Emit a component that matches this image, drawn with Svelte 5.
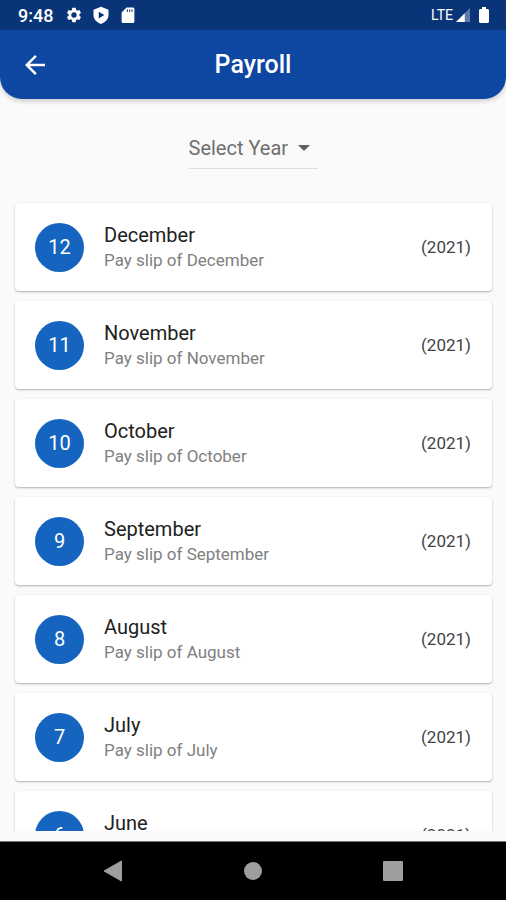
<script lang="ts">
  let year = '';

  const payslips: { month: string; number: number; year: number }[] = [
    { month: 'December', number: 12, year: 2021 },
    { month: 'November', number: 11, year: 2021 },
    { month: 'October', number: 10, year: 2021 },
    { month: 'September', number: 9, year: 2021 },
    { month: 'August', number: 8, year: 2021 },
    { month: 'July', number: 7, year: 2021 },
    { month: 'June', number: 6, year: 2021 }
  ];
</script>

<div class="screen">
  <header class="top">
    <div class="status-bar">
      <span class="clock">9:48</span>
      <div class="status-icons">
        <svg width="18" height="18" viewBox="0 0 24 24" fill="currentColor">
          <path d="M19.14 12.94c.04-.3.06-.61.06-.94 0-.32-.02-.64-.07-.94l2.03-1.58c.18-.14.23-.41.12-.61l-1.92-3.32c-.12-.22-.37-.29-.59-.22l-2.39.96c-.5-.38-1.03-.7-1.62-.94l-.36-2.54c-.04-.24-.24-.41-.48-.41h-3.84c-.24 0-.43.17-.47.41l-.36 2.54c-.59.24-1.13.57-1.62.94l-2.39-.96c-.22-.08-.47 0-.59.22L2.74 8.87c-.12.21-.08.47.12.61l2.03 1.58c-.05.3-.09.63-.09.94s.02.64.07.94l-2.03 1.58c-.18.14-.23.41-.12.61l1.92 3.32c.12.22.37.29.59.22l2.39-.96c.5.38 1.03.7 1.62.94l.36 2.54c.05.24.24.41.48.41h3.84c.24 0 .44-.17.47-.41l.36-2.54c.59-.24 1.13-.56 1.62-.94l2.39.96c.22.08.47 0 .59-.22l1.92-3.32c.12-.22.07-.47-.12-.61l-2.01-1.58zM12 15.6A3.6 3.6 0 1 1 12 8.4a3.6 3.6 0 0 1 0 7.2z" />
        </svg>
        <svg width="18" height="18" viewBox="0 0 24 24" fill="currentColor">
          <path fill-rule="evenodd" d="M12 1 2 5v7c0 5.6 4.2 10 10 12 5.8-2 10-6.4 10-12V5L12 1zM9 7.5v9l7.5-4.5L9 7.5z" />
        </svg>
        <svg width="18" height="18" viewBox="0 0 24 24" fill="currentColor">
          <path fill-rule="evenodd" d="M18.5 2H10L3.500 8.500V20.500c0 1.100.9 2 2 2h13c1.100 0 2-.9 2-2V4c0-1.100-.9-2-2-2zM10.500 4.500h1.500v3h-1.500v-3zm3 0h1.500v3h-1.500v-3zm3 0h1.500v3h-1.500v-3z" />
        </svg>
      </div>
      <span class="network">LTE</span>
      <svg class="signal" width="14" height="14" viewBox="0 0 16 16" fill="currentColor">
        <path d="M16 0v16H0z" opacity="0.35" />
        <path d="M10 6v10H0z" />
      </svg>
      <svg class="battery" width="10" height="16" viewBox="0 0 10 16" fill="currentColor">
        <path d="M3 0h4v2h1.500C9.300 2 10 2.700 10 3.500v11c0 .8-.7 1.500-1.500 1.500h-7C.7 16 0 15.300 0 14.500v-11C0 2.700.7 2 1.500 2H3z" />
      </svg>
    </div>

    <div class="app-bar">
      <button class="back" aria-label="Back">
        <svg width="30" height="30" viewBox="0 0 24 24" fill="currentColor">
          <path d="M20 11H7.830l5.590-5.590L12 4l-8 8 8 8 1.410-1.410L7.830 13H20v-2z" />
        </svg>
      </button>
      <h1>Payroll</h1>
    </div>
  </header>

  <main>
    <div class="year-filter">
      <select bind:value={year} aria-label="Select Year">
        <option value="">Select Year</option>
        <option value="2021">2021</option>
      </select>
      <svg class="caret" width="12" height="6" viewBox="0 0 12 6" fill="currentColor">
        <path d="M0 0h12L6 6z" />
      </svg>
    </div>

    <ul class="payslips">
      {#each payslips as slip}
        <li class="card">
          <span class="avatar">{slip.number}</span>
          <div class="details">
            <span class="month">{slip.month}</span>
            <span class="description">Pay slip of {slip.month}</span>
          </div>
          <span class="year">({slip.year})</span>
        </li>
      {/each}
    </ul>
  </main>

  <nav class="system-nav">
    <button aria-label="Back">
      <svg width="20" height="22" viewBox="0 0 20 22" fill="currentColor">
        <path d="M18.500 1v20L1 11z" stroke="currentColor" stroke-linejoin="round" />
      </svg>
    </button>
    <button aria-label="Home">
      <svg width="20" height="20" viewBox="0 0 20 20" fill="currentColor">
        <circle cx="10" cy="10" r="9" />
      </svg>
    </button>
    <button aria-label="Recent apps">
      <svg width="20" height="20" viewBox="0 0 20 20" fill="currentColor">
        <rect width="20" height="20" rx="1" />
      </svg>
    </button>
  </nav>
</div>

<style>
  :global(body) {
    margin: 0;
    background: #fafafa;
  }

  .screen {
    display: flex;
    flex-direction: column;
    height: 100vh;
    font-family: Roboto, 'Liberation Sans', sans-serif;
    color: #212121;
    background: #fafafa;
  }

  svg {
    display: block;
  }

  button {
    display: flex;
    align-items: center;
    justify-content: center;
    padding: 0;
    border: none;
    background: none;
    color: inherit;
    cursor: pointer;
  }

  .top {
    flex: none;
    overflow: hidden;
    color: #fff;
    background: #0d47a1;
    border-radius: 0 0 22px 22px;
    box-shadow: 0 2px 5px rgba(0, 0, 0, 0.2);
  }

  .status-bar {
    display: flex;
    align-items: center;
    height: 30px;
    padding: 0 17px 0 18px;
    background: #0a3478;
  }

  .clock {
    font-size: 18px;
    font-weight: 500;
  }

  .status-icons {
    display: flex;
    flex: 1;
    gap: 9px;
    margin-left: 12px;
  }

  .network {
    font-size: 14px;
  }

  .signal {
    margin-left: 3px;
  }

  .battery {
    margin-left: 9px;
  }

  .app-bar {
    display: grid;
    grid-template-columns: 30px 1fr 30px;
    align-items: center;
    height: 69px;
    padding: 0 20px;
  }

  h1 {
    margin: 0;
    font-size: 25px;
    font-weight: 500;
    text-align: center;
  }

  main {
    display: flex;
    flex: 1;
    flex-direction: column;
    min-height: 0;
    padding: 29px 0 10px;
  }

  .year-filter {
    display: flex;
    align-items: center;
    align-self: center;
    height: 40px;
    border-bottom: 1px solid #dedede;
    color: #616161;
  }

  select {
    padding: 0 9px 0 0;
    border: none;
    appearance: none;
    outline: none;
    background: none;
    color: #6f6f6f;
    font-family: inherit;
    font-size: 20px;
  }

  .caret {
    margin-right: 8px;
    pointer-events: none;
  }

  .payslips {
    display: flex;
    flex: 1;
    flex-direction: column;
    gap: 10px;
    min-height: 0;
    margin: 24px 0 0;
    padding: 10px 14px 0 15px;
    overflow-y: auto;
    scrollbar-width: none;
    list-style: none;
  }

  .card {
    display: flex;
    flex: none;
    align-items: center;
    box-sizing: border-box;
    height: 88px;
    padding: 0 21px 0 20px;
    border-radius: 4px;
    background: #fff;
    box-shadow: 0 1px 2px rgba(0, 0, 0, 0.3);
  }

  .avatar {
    display: flex;
    align-items: center;
    justify-content: center;
    width: 49px;
    height: 49px;
    border-radius: 50%;
    color: #fff;
    background: #1565c0;
    font-size: 20px;
  }

  .details {
    display: flex;
    flex: 1;
    flex-direction: column;
    margin-left: 20px;
  }

  .month {
    font-size: 20px;
    line-height: 26px;
  }

  .description {
    color: #808080;
    font-size: 17px;
    line-height: 24px;
  }

  .year {
    color: #424242;
    font-size: 17px;
  }

  .system-nav {
    display: flex;
    flex: none;
    align-items: center;
    justify-content: center;
    gap: 80px;
    height: 58px;
    border-top: 1px solid #757575;
    color: #9e9e9e;
    background: #000;
  }

  .system-nav button {
    width: 60px;
    height: 48px;
  }
</style>
